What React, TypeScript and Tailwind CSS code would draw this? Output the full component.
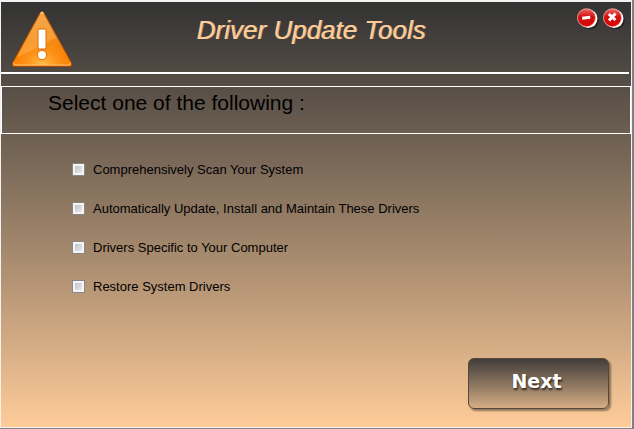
import { useState } from "react";

const OPTIONS = [
  "Comprehensively Scan Your System",
  "Automatically Update, Install and Maintain These Drivers",
  "Drivers Specific to Your Computer",
  "Restore System Drivers",
];

const WarningIcon = () => (
  <svg width="62" height="60" viewBox="0 0 62 60" aria-hidden="true">
    <defs>
      <linearGradient id="warn-body" x1="0" y1="0" x2="0" y2="1">
        <stop offset="0" stopColor="#ee9a3c" />
        <stop offset="0.5" stopColor="#f48a18" />
        <stop offset="0.75" stopColor="#fb7f04" />
        <stop offset="1" stopColor="#fb8406" />
      </linearGradient>
      <radialGradient id="warn-glow" cx="0.5" cy="1" r="0.5">
        <stop offset="0" stopColor="#ffc04f" />
        <stop offset="1" stopColor="#ff9a1c" stopOpacity="0" />
      </radialGradient>
      <linearGradient id="warn-gloss" x1="0" y1="0" x2="0" y2="1">
        <stop offset="0" stopColor="#ffc878" stopOpacity="0.25" />
        <stop offset="1" stopColor="#ffc36b" stopOpacity="0.4" />
      </linearGradient>
    </defs>
    <path
      d="M29 5Q31 2 33 5L60 54Q62 58.500 58 58.500H4Q0 58.500 2 54Z"
      fill="url(#warn-body)"
      stroke="#a04a08"
      strokeWidth="1"
    />
    <path d="M30 5Q31 3 32 5L59 54Q60 57 57.500 57H4.500Q2 57 3 54Z" fill="url(#warn-glow)" />
    <path d="M30 5Q31 3 32 5L45 30C34 34 22 43 6 49Z" fill="url(#warn-gloss)" />
    <path d="M29.500 5.500Q31 3 32.500 5.500" fill="none" stroke="#ffd9a0" strokeWidth="1.200" />
    <path d="M2.500 54.500Q2 57 5 57H57Q60 57 59.500 54.500" fill="none" stroke="#fdbd70" strokeWidth="1" />
    <rect x="26.500" y="20.500" width="9" height="21" rx="1.500" fill="#e06c08" />
    <circle cx="31" cy="47" r="5.200" fill="#ee7a10" />
    <rect x="27.500" y="21.500" width="7" height="19" rx="0.800" fill="#fff" />
    <circle cx="31" cy="47" r="4" fill="#fff" />
  </svg>
);

const RoundIcon = ({ kind }: { kind: "minimize" | "close" }) => (
  <svg width="22" height="22" viewBox="0 0 22 22" aria-hidden="true">
    <defs>
      <linearGradient id={`red-${kind}`} x1="0" y1="0" x2="0" y2="1">
        <stop offset="0" stopColor="#ee6a66" />
        <stop offset="0.45" stopColor="#d2100e" />
        <stop offset="1" stopColor="#d90402" />
      </linearGradient>
    </defs>
    <ellipse cx="12.500" cy="12.500" rx="9.300" ry="8.800" fill="#151413" opacity="0.6" />
    <circle cx="11.200" cy="10.600" r="9.300" fill="#fff" />
    <circle cx="9.500" cy="9.700" r="9" fill={`url(#red-${kind})`} stroke="#f3b0ae" strokeWidth="0.800" />
    {kind === "minimize" ? (
      <path d="M5.200 10.300L13.200 9.300" stroke="#fff" strokeWidth="3" />
    ) : (
      <path d="M5.800 6L12.500 12M12.500 5.500L6 12.500" stroke="#fff" strokeWidth="3" />
    )}
  </svg>
);

const App = () => {
  const [selected, setSelected] = useState<string[]>([]);

  const toggle = (label: string) =>
    setSelected((prev) =>
      prev.includes(label) ? prev.filter((l) => l !== label) : [...prev, label]
    );

  return (
    <div className="min-h-screen flex bg-[#808080] pr-0.5 pb-px font-['Liberation_Sans',Arial,sans-serif]">
      <main className="flex-1 flex flex-col border border-t-2 border-[#f4f1ee] bg-linear-to-b from-[#333333] to-[#ffcc99]">
        <header className="flex h-18 items-start border-b-2 border-white pl-2.5 pr-1 pt-1.5 mr-0.5">
          <WarningIcon />
          <h1 className="flex-1 pt-1.5 pr-7 text-center text-[26px] leading-8 italic text-[#ffcc99] [text-shadow:1px_0_0_#ffcc99aa]">
            Driver Update Tools
          </h1>
          <div className="flex gap-1">
            <button type="button" aria-label="Minimize">
              <RoundIcon kind="minimize" />
            </button>
            <button type="button" aria-label="Close">
              <RoundIcon kind="close" />
            </button>
          </div>
        </header>

        <h2 className="mt-3 h-12 border border-white pl-[46px] pt-1 text-[21px] leading-6 text-black">
          Select one of the following :
        </h2>

        <ul className="mt-[25px] ml-[71px] flex flex-col gap-[19px]">
          {OPTIONS.map((label) => (
            <li key={label} className="h-5">
              <label className="inline-flex h-5 items-center gap-2 text-[13px] text-black">
                <input
                  type="checkbox"
                  checked={selected.includes(label)}
                  onChange={() => toggle(label)}
                  className="size-[13px] appearance-none border border-[#8a8682] bg-linear-to-br from-[#b4b8c2] to-[#f4f4f4] shadow-[inset_0_0_0_2px_#f4f4f4] checked:from-[#333333] checked:to-[#333333]"
                />
                {label}
              </label>
            </li>
          ))}
        </ul>

        <div className="mt-auto flex justify-end pr-[22px] pb-[18px]">
          <button
            type="button"
            className="h-[51px] w-[141px] rounded-md border border-[#54473c] bg-linear-to-b from-[#433e3a] to-[#d6ad84] pb-1 pr-1 font-['DejaVu_Sans',Verdana,sans-serif] text-[19px] font-bold text-white shadow-[2px_2px_2px_#00000066] [text-shadow:1px_2px_2px_#000000aa]"
          >
            Next
          </button>
        </div>
      </main>
    </div>
  );
};

export default App;
